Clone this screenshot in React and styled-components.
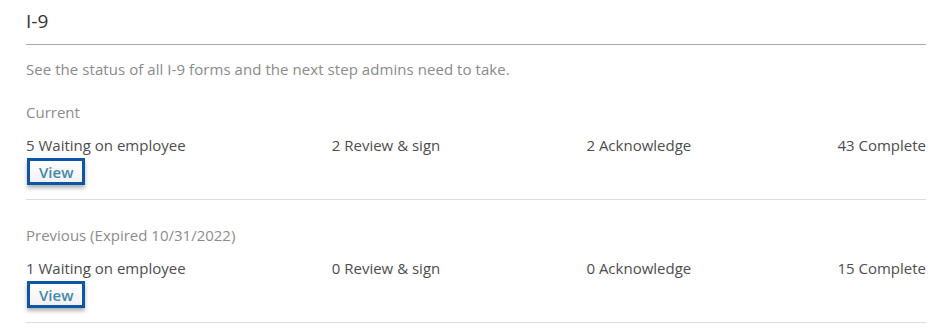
import React from "react";
import styled, { createGlobalStyle } from "styled-components";

const GlobalStyle = createGlobalStyle`
  body {
    margin: 0;
    background: #fff;
    font-family: "Open Sans", "Liberation Sans", sans-serif;
  }
`;

const Page = styled.div`
  padding: 8px 11px 0 26px;
`;

const Title = styled.h2`
  margin: 0;
  font-size: 19px;
  font-weight: 400;
  line-height: 26px;
  color: #333;
  padding-bottom: 10px;
  border-bottom: 1px solid #a9a9a9;
`;

const Intro = styled.p`
  margin: 14px 0 0;
  font-size: 15px;
  line-height: 20px;
  letter-spacing: 0.06px;
  color: #8a8a8a;
`;

const Section = styled.section`
  padding-top: 23px;
  padding-bottom: 14px;
  border-bottom: 1px solid #dcdcdc;

  & + & {
    padding-top: 25px;
  }
`;

const SectionLabel = styled.div`
  font-size: 15px;
  line-height: 20px;
  color: #8c8c8c;
`;

const Stats = styled.div`
  display: flex;
  justify-content: space-between;
  margin-top: 13px;
  font-size: 15px;
  line-height: 20px;
  color: #4d4d4d;
`;

const ViewButton = styled.button`
  display: block;
  margin: 3px 0 0 1px;
  padding: 0 9px;
  height: 27px;
  font-family: inherit;
  font-size: 15px;
  font-weight: 600;
  line-height: 20px;
  color: #4289aa;
  background: linear-gradient(#fff, #f2f2f2);
  border: 3px solid #0d56a6;
  box-shadow: 0 3px 4px rgba(0, 0, 0, 0.3);
  cursor: pointer;
`;

const sections = [
  {
    label: "Current",
    stats: ["5 Waiting on employee", "2 Review & sign", "2 Acknowledge", "43 Complete"],
  },
  {
    label: "Previous (Expired 10/31/2022)",
    stats: ["1 Waiting on employee", "0 Review & sign", "0 Acknowledge", "15 Complete"],
  },
];

export default function App() {
  return (
    <Page>
      <GlobalStyle />
      <Title>I-9</Title>
      <Intro>See the status of all I-9 forms and the next step admins need to take.</Intro>
      {sections.map((s) => (
        <Section key={s.label}>
          <SectionLabel>{s.label}</SectionLabel>
          <Stats>
            {s.stats.map((t) => (
              <span key={t}>{t}</span>
            ))}
          </Stats>
          <ViewButton>View</ViewButton>
        </Section>
      ))}
    </Page>
  );
}
